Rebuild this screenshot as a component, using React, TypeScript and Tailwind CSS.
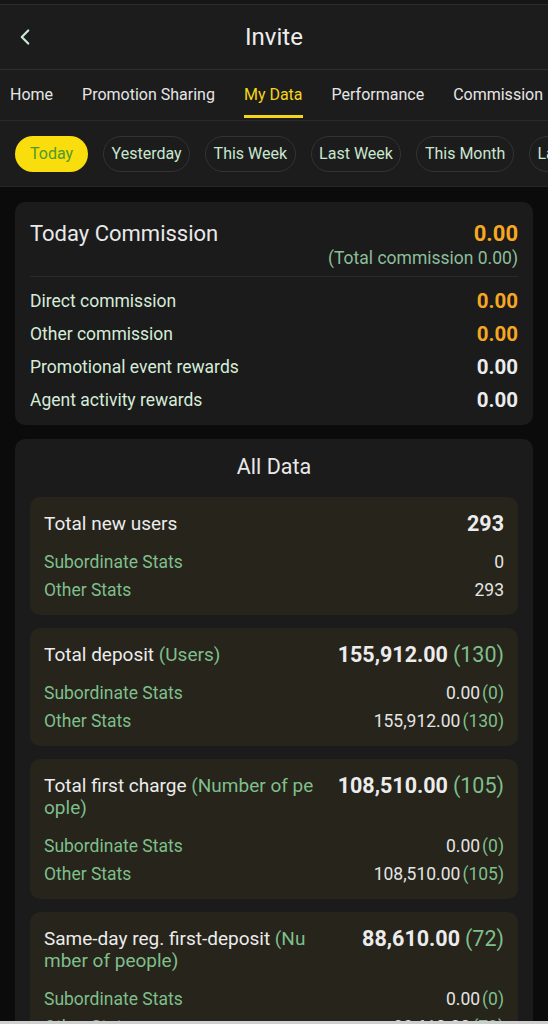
import { ChevronLeft } from "lucide-react";

const tabs = ["Home", "Promotion Sharing", "My Data", "Performance", "Commission"];
const chips = ["Today", "Yesterday", "This Week", "Last Week", "This Month", "Last Month"];

const commissionRows = [
  { label: "Direct commission", value: "0.00", orange: true },
  { label: "Other commission", value: "0.00", orange: true },
  { label: "Promotional event rewards", value: "0.00", orange: false },
  { label: "Agent activity rewards", value: "0.00", orange: false },
];

type Stat = {
  title: string;
  hint?: string;
  total: string;
  count?: string;
  sub: [string, string?];
  other: [string, string?];
};

const stats: Stat[] = [
  { title: "Total new users", total: "293", sub: ["0"], other: ["293"] },
  {
    title: "Total deposit",
    hint: "(Users)",
    total: "155,912.00",
    count: "(130)",
    sub: ["0.00", "(0)"],
    other: ["155,912.00", "(130)"],
  },
  {
    title: "Total first charge",
    hint: "(Number of people)",
    total: "108,510.00",
    count: "(105)",
    sub: ["0.00", "(0)"],
    other: ["108,510.00", "(105)"],
  },
  {
    title: "Same-day reg. first-deposit",
    hint: "(Number of people)",
    total: "88,610.00",
    count: "(72)",
    sub: ["0.00", "(0)"],
    other: ["88,610.00", "(72)"],
  },
];

function StatRow({ label, value }: { label: string; value: [string, string?] }) {
  return (
    <div className="flex h-[28px] items-center justify-between text-[17.5px]">
      <span className="text-[#7fbf8c]">{label}</span>
      <span className="text-[#e4e4e4]">
        {value[0]}
        {value[1] && <span className="ml-[2px] text-[#7fbf8c]">{value[1]}</span>}
      </span>
    </div>
  );
}

function StatCard({ stat }: { stat: Stat }) {
  return (
    <div className="rounded-[10px] bg-[#26241b] px-[14px] pt-[16px] pb-[11px]">
      <div className="flex items-start justify-between">
        <p className="w-[276px] shrink-0 break-all text-[19px] leading-[22px] text-[#ececec]">
          {stat.title}
          {stat.hint && <span className="text-[#7fbf8c]"> {stat.hint}</span>}
        </p>
        <p className="whitespace-nowrap text-[21.5px] leading-[22px]">
          <span className="font-bold text-[#ececec]">{stat.total}</span>
          {stat.count && <span className="ml-[5px] text-[#7fbf8c]">{stat.count}</span>}
        </p>
      </div>
      <div className="mt-[13px]">
        <StatRow label="Subordinate Stats" value={stat.sub} />
        <StatRow label="Other Stats" value={stat.other} />
      </div>
    </div>
  );
}

export default function App() {
  return (
    <div
      className="flex h-[1024px] w-[548px] flex-col overflow-hidden bg-[#0b0b0b]"
      style={{ fontFamily: "Roboto, 'Noto Sans', sans-serif" }}
    >
      <div className="shrink-0 bg-[#1c1c1c]">
        <div className="h-[5px] border-b border-[#2c2c2c] bg-[#161616]" />

        {/* header */}
        <div className="relative flex h-[65px] items-center justify-center border-b border-[#2e2e2e]">
          <ChevronLeft className="absolute left-[12px] top-[19px] text-[#c9ecd6]" size={26} strokeWidth={2} />
          <h1 className="text-[24px] text-[#ededed]">Invite</h1>
        </div>

        {/* tabs */}
        <div className="flex h-[51px] items-stretch gap-[29px] overflow-hidden whitespace-nowrap border-b border-[#2a2a2a] pl-[10px] text-[16px] text-[#e6e6e6]">
          {tabs.map((t) => (
            <div key={t} className="relative flex items-center">
              <span className={t === "My Data" ? "text-[#f3d51b]" : ""}>{t}</span>
              {t === "My Data" && (
                <div className="absolute bottom-[2px] left-0 right-0 h-[3px] bg-[#f3d51b]" />
              )}
            </div>
          ))}
        </div>

        {/* date chips */}
        <div className="flex h-[66px] items-center gap-[15px] overflow-hidden whitespace-nowrap border-b border-[#262626] pl-[15px]">
          {chips.map((c) =>
            c === "Today" ? (
              <div key={c} className="flex h-[36px] shrink-0 items-center rounded-full bg-[#fadd0c] px-[15px] text-[16px] text-[#4e9a2c]">
                {c}
              </div>
            ) : (
              <div
                key={c}
                className="flex h-[36px] shrink-0 items-center rounded-full border border-[#333333] px-[7.5px] text-[16px] text-[#c9e6cf]"
              >
                {c}
              </div>
            )
          )}
        </div>
      </div>

      <div className="flex-1 overflow-hidden px-[15px] pt-[15px]">
        {/* today commission */}
        <div className="rounded-[10px] bg-[#1b1b1b] px-[15px] pt-[17px] pb-[8px]">
          <div className="flex items-start justify-between">
            <h2 className="text-[22px] leading-[30px] text-[#e9e9e9]">Today Commission</h2>
            <div className="text-right">
              <p className="text-[22px] font-bold leading-[30px] text-[#f6a822]">0.00</p>
              <p className="text-[17.5px] leading-[18px] text-[#8bbf99]">(Total commission 0.00)</p>
            </div>
          </div>
          <div className="mt-[9px] border-t border-[#2a2a2a] pt-[8px]">
            {commissionRows.map((r) => (
              <div key={r.label} className="flex h-[33px] items-center justify-between">
                <span className="text-[17.5px] text-[#d6ecd9]">{r.label}</span>
                <span className={`text-[20.5px] font-bold ${r.orange ? "text-[#f6a822]" : "text-[#ececec]"}`}>
                  {r.value}
                </span>
              </div>
            ))}
          </div>
        </div>

        {/* all data */}
        <div className="mt-[14px] rounded-[10px] bg-[#1b1b1b] px-[15px] pt-[14px] pb-[14px]">
          <h2 className="mb-[16px] text-center text-[21.5px] leading-[28px] text-[#e9e9e9]">All Data</h2>
          <div className="flex flex-col gap-[13px]">
            {stats.map((s) => (
              <StatCard key={s.title} stat={s} />
            ))}
          </div>
        </div>
      </div>

      <div className="h-[3px] shrink-0 bg-[#cfcfcf]" />
    </div>
  );
}
